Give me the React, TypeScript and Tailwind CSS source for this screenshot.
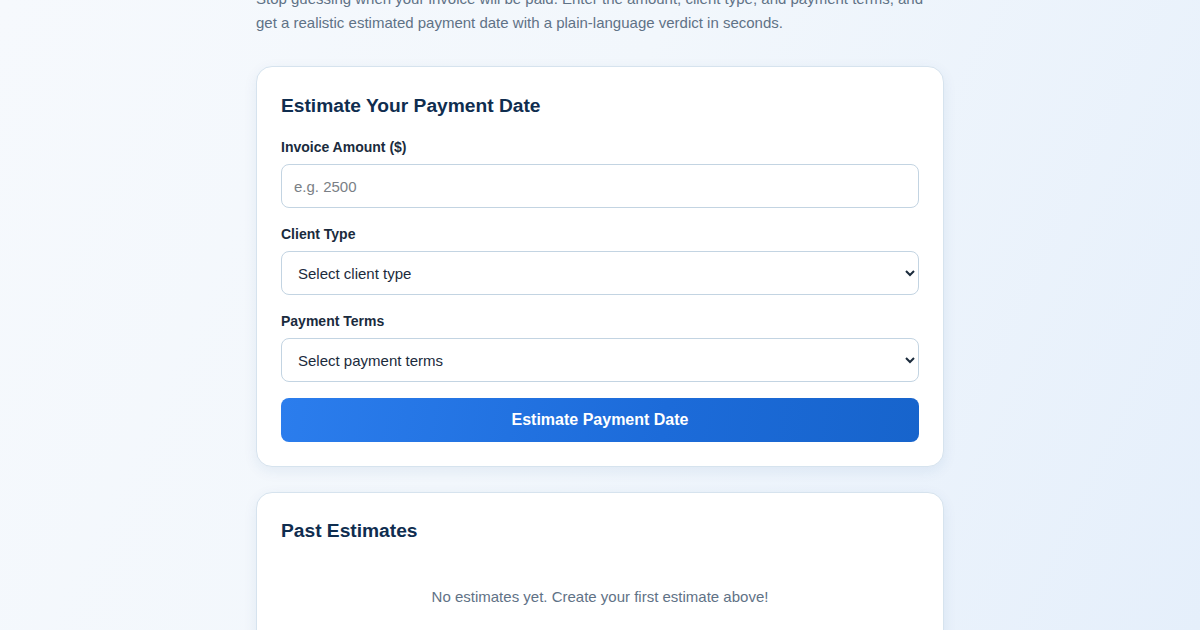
import React from "react";

const fieldBase =
  "w-full h-[44px] rounded-lg border border-[#c3d4e2] bg-white text-[15px] text-[#1b2b3c] outline-none";

function Label({ children }: { children: React.ReactNode }) {
  return (
    <label className="block text-[14px] leading-5 font-semibold text-[#1a2b3d] mb-[7px]">
      {children}
    </label>
  );
}

export default function App() {
  const [amount, setAmount] = React.useState("");
  const [clientType, setClientType] = React.useState("");
  const [terms, setTerms] = React.useState("");

  return (
    <div
      className="h-[630px] overflow-hidden bg-[linear-gradient(115deg,#f6f9fd_0%,#f2f7fc_45%,#e5effb_100%)]"
      style={{ fontFamily: '"Liberation Sans", Arial, sans-serif' }}
    >
      <div className="mx-auto w-[720px] px-4 -mt-[13px]">
        <p className="text-[15px] leading-6 text-[#5f7286] pr-4">
          Stop guessing when your invoice will be paid. Enter the amount, client type, and payment terms, and
          get a realistic estimated payment date with a plain-language verdict in seconds.
        </p>

        <div className="mt-[31px] rounded-2xl border border-[#d6e3ee] bg-white px-6 pb-6 pt-[25px] shadow-[0_4px_14px_rgba(30,80,140,0.08)]">
          <h2 className="text-[19.2px] leading-7 font-bold text-[#0f2d4f] mb-[17px]">
            Estimate Your Payment Date
          </h2>

          <div className="mb-4">
            <Label>Invoice Amount ($)</Label>
            <input
              type="number"
              value={amount}
              onChange={(e) => setAmount(e.target.value)}
              placeholder="e.g. 2500"
              className={`${fieldBase} px-3 placeholder:text-[#7a7f86]`}
            />
          </div>

          <div className="mb-4">
            <Label>Client Type</Label>
            <select
              value={clientType}
              onChange={(e) => setClientType(e.target.value)}
              className={`${fieldBase} px-3`}
            >
              <option value="">Select client type</option>
              <option value="enterprise">Enterprise</option>
              <option value="smb">Small business</option>
              <option value="startup">Startup</option>
            </select>
          </div>

          <div className="mb-4">
            <Label>Payment Terms</Label>
            <select
              value={terms}
              onChange={(e) => setTerms(e.target.value)}
              className={`${fieldBase} px-3`}
            >
              <option value="">Select payment terms</option>
              <option value="net15">Net 15</option>
              <option value="net30">Net 30</option>
              <option value="net60">Net 60</option>
            </select>
          </div>

          <button
            type="button"
            className="w-full h-[44px] rounded-lg bg-[linear-gradient(100deg,#2b7ded_0%,#1c6bd9_60%,#1764cc_100%)] text-white text-[16px] font-bold"
          >
            Estimate Payment Date
          </button>
        </div>

        <div className="mt-[25px] rounded-2xl border border-[#d6e3ee] bg-white p-6 shadow-[0_4px_14px_rgba(30,80,140,0.08)]">
          <h2 className="text-[19.2px] leading-7 font-bold text-[#0f2d4f]">Past Estimates</h2>
          <p className="pt-10 pb-8 text-center text-[15px] leading-6 text-[#5f7286]">
            No estimates yet. Create your first estimate above!
          </p>
        </div>
      </div>
    </div>
  );
}
